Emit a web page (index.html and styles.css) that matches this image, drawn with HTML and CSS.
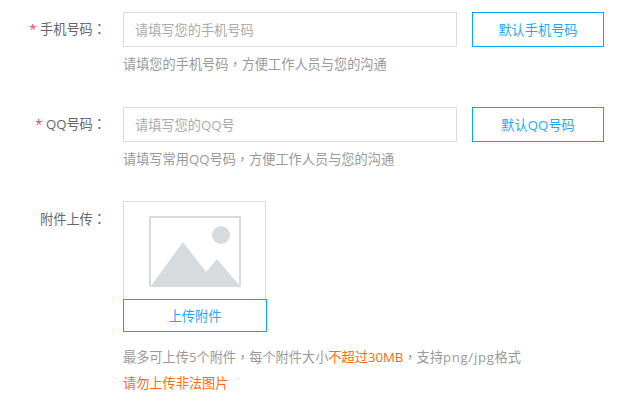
FILE: index.html
```html
<!DOCTYPE html>
<html lang="en">
<head>
    <meta charset="UTF-8">
    <title>上传附件</title>
    <link rel="stylesheet" href="styles.css">
</head>
<body>
    <div class="form">
        <div class="row">
            <label class="label"><span class="star">*</span> 手机号码<span class="punct">：</span></label>
            <div class="field">
                <div class="line">
                    <input class="text-input" type="text" placeholder="请填写您的手机号码">
                    <button class="btn" type="button">默认手机号码</button>
                </div>
                <div class="hint">请填您的手机号码<span class="punct">，</span>方便工作人员与您的沟通</div>
            </div>
        </div>
        <div class="row">
            <label class="label"><span class="star">*</span> QQ号码<span class="punct">：</span></label>
            <div class="field">
                <div class="line">
                    <input class="text-input" type="text" placeholder="请填写您的QQ号">
                    <button class="btn" type="button">默认QQ号码</button>
                </div>
                <div class="hint">请填写常用QQ号码<span class="punct">，</span>方便工作人员与您的沟通</div>
            </div>
        </div>
        <div class="row">
            <label class="label">附件上传<span class="punct">：</span></label>
            <div class="field">
                <div class="upload">
                    <div class="preview">
                        <svg width="92" height="71" viewBox="0 0 92 71">
                            <rect x="1" y="1" width="90" height="69" fill="#fff" stroke="#d8dbdd" stroke-width="2"/>
                            <circle cx="72" cy="19" r="9" fill="#d8dbdd"/>
                            <path d="M2 70 L34 26 L57 56 L68 43 L91 70 Z" fill="#d8dbdd"/>
                        </svg>
                    </div>
                    <button class="btn upload-btn" type="button">上传附件</button>
                </div>
                <div class="hint upload-hint">最多可上传5个附件<span class="punct">，</span>每个附件大小<span class="warn">不超过30MB</span><span class="punct">，</span>支持<span class="latin">png/jpg</span>格式</div>
                <div class="warn warn-line">请勿上传非法图片</div>
            </div>
        </div>
    </div>
</body>
</html>
```

FILE: styles.css
```css
* {
    box-sizing: border-box;
}
body {
    margin: 0;
    background-color: #fff;
    font-family: "Open Sans", "Noto Sans CJK SC", sans-serif;
    font-size: 13.2px;
    color: #666;
}
.form {
    padding: 12px 0 0 0;
}
.row {
    display: flex;
    margin-bottom: 33px;
}
.row:last-child {
    margin-bottom: 0;
}
.label {
    width: 123px;
    flex-shrink: 0;
    padding-right: 17px;
    height: 35px;
    line-height: 34px;
    text-align: right;
    color: #666;
}
.star {
    color: #ff3b5c;
}
.punct {
    font-family: "Noto Sans CJK TC", sans-serif;
}
.latin {
    letter-spacing: 0.7px;
}
.line {
    display: flex;
    gap: 15px;
}
.text-input {
    width: 334px;
    height: 35px;
    padding: 0 11px;
    border: 1px solid #dcdcdc;
    outline: none;
    font: inherit;
    color: #666;
}
.text-input::placeholder {
    color: #aaa;
}
.btn {
    width: 132px;
    height: 35px;
    padding: 0;
    border: 1px solid #00a8ff;
    background-color: #fff;
    font: inherit;
    color: #1ea7f5;
}
.hint {
    margin-top: 7px;
    line-height: 20px;
    color: #999;
}
.upload {
    width: 144px;
    margin-top: -1px;
}
.preview {
    width: 143px;
    height: 98px;
    padding: 14px 0 0 25px;
    border: 1px solid #dcdcdc;
    border-bottom: none;
}
.preview svg {
    display: block;
}
.upload-btn {
    display: block;
    width: 144px;
    height: 33px;
}
.upload-hint {
    margin-top: 15px;
}
.warn {
    color: #ff6a13;
}
.warn-line {
    margin-top: 6px;
    line-height: 20px;
}
```
